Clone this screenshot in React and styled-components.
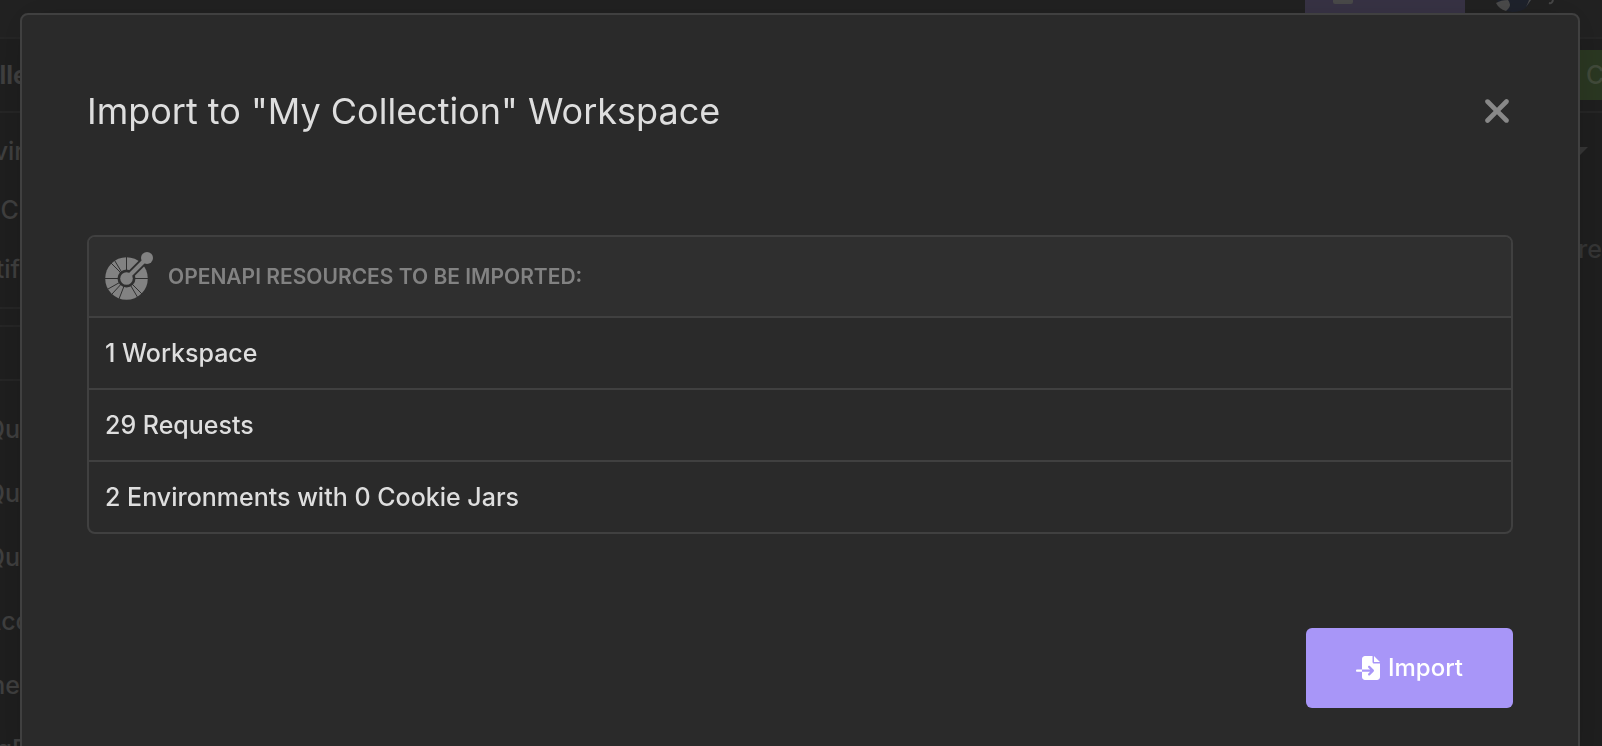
import React from "react";
import styled, { createGlobalStyle, css } from "styled-components";
import { FaFileImport, FaXmark } from "react-icons/fa6";

const GlobalStyle = createGlobalStyle`
  *, *::before, *::after { box-sizing: border-box; }
  html, body { margin: 0; background: #1f1f1f; }
  body {
    font-family: Inter, "Liberation Sans", sans-serif;
    font-size: 25px;
    font-weight: 500;
    line-height: 32px;
    color: #dedede;
  }
`;

const AppShell = styled.div`
  display: flex;
  flex-direction: column;
  height: 100vh;
  overflow: hidden;
  color: #404040;
`;

const bar = css`
  display: flex;
  flex: none;
  border-bottom: 2px solid #262626;
`;

const TopBar = styled.header`
  ${bar}
  justify-content: flex-end;
  align-items: flex-start;
  gap: 30px;
  height: 39px;
  padding-right: 48px;
  background: #222222;
`;

const InviteButton = styled.button`
  display: flex;
  justify-content: flex-start;
  width: 160px;
  height: 32px;
  padding: 0 28px;
  border: 0;
  background: #393446;
`;

const InviteMark = styled.span`
  width: 20px;
  height: 4px;
  border-radius: 0 0 2px 2px;
  background: #4b4b4b;
`;

const Account = styled.div`
  display: flex;
  width: 59px;
`;

const Toolbar = styled.div`
  ${bar}
  align-items: center;
  justify-content: space-between;
  height: 74px;
`;

const SideLabel = styled.div`
  display: flex;
  justify-content: flex-end;
  width: ${(p) => p.$width || 28}px;
  overflow: hidden;
  white-space: nowrap;
  font-weight: ${(p) => (p.$bold ? 700 : 500)};
`;

const SendButton = styled.button`
  width: 50px;
  height: 50px;
  padding: 0 0 0 34px;
  border: 0;
  overflow: hidden;
  background: #2b3822;
  color: #424b3b;
  font: inherit;
  text-align: left;
`;

const Body = styled.div`
  display: flex;
  justify-content: space-between;
`;

const Sidebar = styled.nav`
  width: 80px;
`;

const SideGroup = styled.div`
  display: grid;
  grid-auto-rows: ${(p) => p.$row}px;
  align-items: center;
  padding: ${(p) => p.$pad};
  border-bottom: 2px solid #262626;
`;

const Details = styled.div`
  display: flex;
  flex-direction: column;
  align-items: flex-end;
  gap: 76px;
  padding-top: 34px;
  color: #363636;
`;

const Caret = styled.svg`
  width: 20px;
  height: 10px;
  margin-right: 14px;
`;

const Overlay = styled.div`
  position: fixed;
  inset: 0;
  padding: 13px 22px 0 20px;
  overflow: hidden;
`;

const Dialog = styled.section`
  display: flex;
  flex-direction: column;
  min-height: 100vh;
  padding: 64px 65px;
  border: 2px solid #404040;
  border-radius: 8px;
  background: #2a2a2a;
  box-shadow: 0 0 40px rgba(0, 0, 0, 0.15);
`;

const DialogHeader = styled.header`
  display: flex;
  justify-content: space-between;
  align-items: center;
  height: 64px;
`;

const Title = styled.h1`
  margin: 0;
  font-size: 36px;
  line-height: 48px;
  font-weight: 400;
`;

const CloseButton = styled.button`
  display: flex;
  justify-content: center;
  width: 32px;
  padding: 0;
  border: 0;
  background: none;
  color: #888888;
  font-size: 38px;
  cursor: pointer;

  svg {
    flex: none;
  }
`;

const Resources = styled.table`
  width: 100%;
  margin-top: 92px;
  border: 2px solid #404040;
  border-radius: 8px;
  border-collapse: separate;
  border-spacing: 0;
  text-align: left;
`;

const HeadCell = styled.th`
  height: 79px;
  padding: 0 16px;
  border-radius: 6px 6px 0 0;
  background: #2f2f2f;
  color: #828282;
  font-size: 21px;
  line-height: 24px;
  font-weight: 600;
`;

const HeadContent = styled.span`
  display: flex;
  align-items: center;
  gap: 13px;
  text-transform: uppercase;
`;

const Cell = styled.td`
  height: 72px;
  padding: 0 16px;
  border-top: 2px solid #404040;
`;

const DialogFooter = styled.footer`
  display: flex;
  justify-content: flex-end;
  margin-top: 94px;
`;

const ImportButton = styled.button`
  display: flex;
  align-items: center;
  justify-content: center;
  gap: 8px;
  width: 207px;
  height: 80px;
  border: 0;
  border-radius: 6px;
  background: #a896f8;
  color: #ffffff;
  font: inherit;
  font-size: 24px;
  cursor: pointer;
`;

function OpenApiIcon() {
  return (
    <svg width="50" height="50" viewBox="0 1 50 50" aria-hidden="true">
      <circle cx="21.5" cy="27.5" r="21.3" fill="#828282" />
      <path
        d="M21.5 27.5V6M21.5 27.5H0M21.5 27.5H43M19 25L6 12M19 25L9 8.5M19 29L3 38M19 30L7 43M21 30L14 48M23 30L33 47M23 29L37 43"
        stroke="#2f2f2f"
      />
      <circle cx="21.5" cy="27.5" r="9" fill="#2f2f2f" />
      <path d="M21.5 27.5L42 7" stroke="#2f2f2f" strokeWidth="8" />
      <path d="M21.5 27.5L42 7" stroke="#828282" strokeWidth="4" />
      <circle cx="21.5" cy="27.5" r="6.3" fill="#828282" />
      <circle cx="42" cy="7" r="6" fill="#828282" />
    </svg>
  );
}

function Avatar() {
  return (
    <svg width="59" height="14" viewBox="0 0 59 14" aria-hidden="true">
      <path d="M2 0H36Q32 12 17 12Q6 11 2 0Z" fill="#1f232d" />
      <path d="M1 3Q6 0 13 0Q17 5 13 9L11 11Q4 9 1 3Z" fill="#4c4c4c" />
      <path d="M34 0H36L31 7Q33 3 34 0Z" fill="#4c4c4c" />
      <path d="M58 0Q57 4 54 3" fill="none" stroke="#484848" strokeWidth="2" />
    </svg>
  );
}

const resources = ["1 Workspace", "29 Requests", "2 Environments with 0 Cookie Jars"];

export default function App() {
  return (
    <>
      <GlobalStyle />
      <AppShell>
        <TopBar>
          <InviteButton type="button" aria-label="Invite"><InviteMark /></InviteButton>
          <Account><Avatar /></Account>
        </TopBar>
        <Toolbar>
          <SideLabel $bold>lle</SideLabel>
          <SendButton type="button">C</SendButton>
        </Toolbar>
        <Body>
          <Sidebar>
            <SideGroup $row={59} $pad="8px 0 9px">
              <SideLabel $width={24}>vir</SideLabel>
              <SideLabel $width={34}>Co</SideLabel>
              <SideLabel $width={20}>tif</SideLabel>
            </SideGroup>
            <SideGroup $row={16} $pad="16px 0 0" />
            <SideGroup $row={54} $pad="52px 0 0" />
            <SideGroup $row={64} $pad="16px 0 0">
              <SideLabel $width={20}>Qu</SideLabel>
              <SideLabel $width={20}>Qu</SideLabel>
              <SideLabel $width={20}>Qu</SideLabel>
              <SideLabel $width={30}>Acc</SideLabel>
              <SideLabel $width={20}>ne</SideLabel>
              <SideLabel $width={30}>gD</SideLabel>
            </SideGroup>
          </Sidebar>
          <Details>
            <Caret viewBox="0 0 20 10"><path d="M0 0H20L10 10Z" fill="#363636" /></Caret>
            <span>re</span>
          </Details>
        </Body>
      </AppShell>
      <Overlay>
        <Dialog role="dialog" aria-labelledby="import-title">
          <DialogHeader>
            <Title id="import-title">Import to "My Collection" Workspace</Title>
            <CloseButton type="button" aria-label="Close"><FaXmark /></CloseButton>
          </DialogHeader>
          <Resources>
            <thead>
              <tr>
                <HeadCell scope="col">
                  <HeadContent><OpenApiIcon />OpenAPI resources to be imported:</HeadContent>
                </HeadCell>
              </tr>
            </thead>
            <tbody>
              {resources.map((name) => (
                <tr key={name}><Cell>{name}</Cell></tr>
              ))}
            </tbody>
          </Resources>
          <DialogFooter>
            <ImportButton type="button"><FaFileImport />Import</ImportButton>
          </DialogFooter>
        </Dialog>
      </Overlay>
    </>
  );
}
